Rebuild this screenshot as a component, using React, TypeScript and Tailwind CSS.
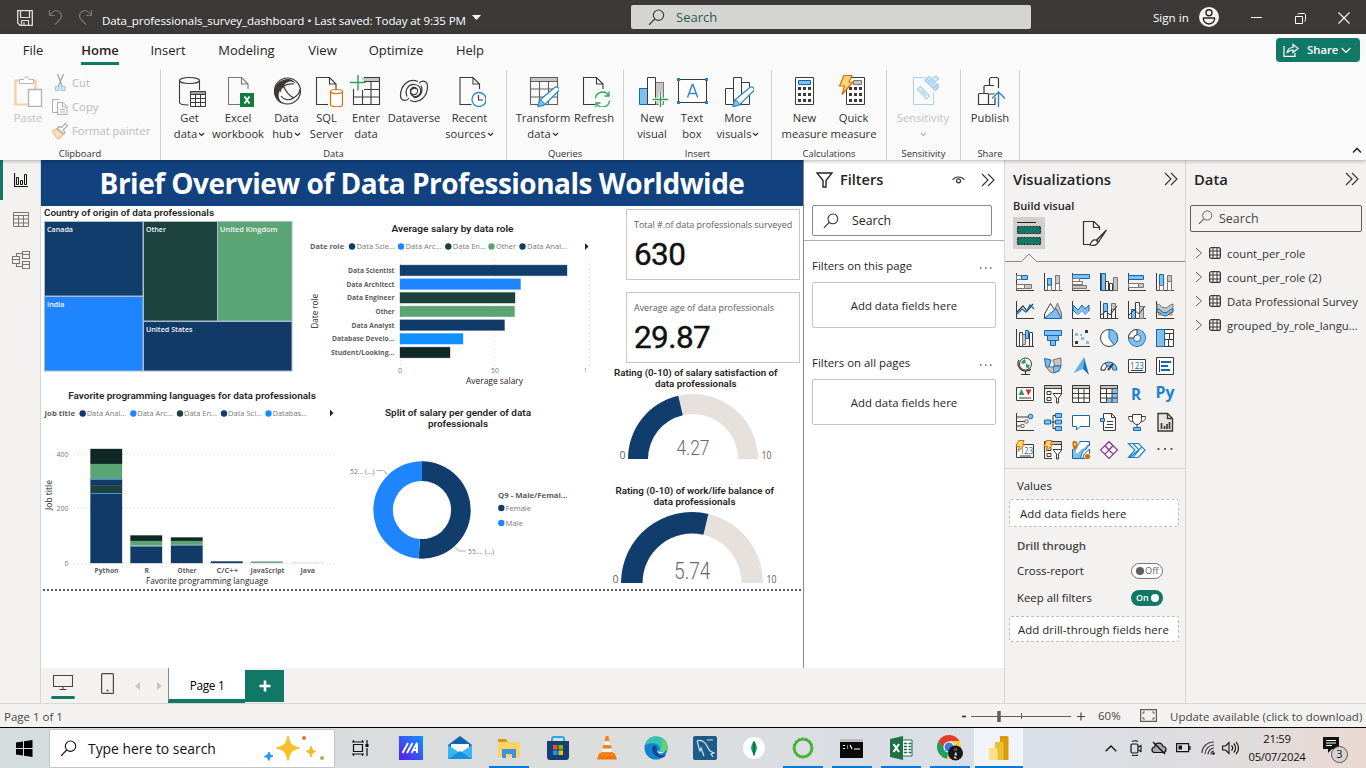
import React from "react";

type Kids = { children?: React.ReactNode };

const K = "#3b3a39";
const B = "#1068b5";
const F = "#83beec";
const G = "#c8c6c4";
const M = "#797775";

function Ico({ w = 32, h = 32, vb, children, className = "" }: { w?: number; h?: number; vb?: string; className?: string } & Kids) {
  return (
    <svg width={w} height={h} viewBox={vb ?? `0 0 ${w} ${h}`} fill="none" className={`block shrink-0 ${className}`}>
      {children}
    </svg>
  );
}

function T({ x, y, w, s, c = "#252423", b = 400, f = "Open Sans", children }: { x: number; y: number; w: number; s: number; c?: string; b?: number; f?: string; children: string }) {
  return (
    <text x={x} y={y} textLength={w} lengthAdjust="spacingAndGlyphs" fontSize={s} fill={c} fontWeight={b} fontFamily={`${f}, sans-serif`}>
      {children}
    </text>
  );
}

/* ---------- shared glyphs ---------- */
const Search = ({ size = 17, color = "#323130", className = "" }: { size?: number; color?: string; className?: string }) => (
  <Ico w={size} h={size} vb="0 0 17 17" className={className}>
    <circle cx="10.5" cy="6.2" r="5.2" stroke={color} strokeWidth="1.1" />
    <path d="M6.7 10 1 15.8" stroke={color} strokeWidth="1.2" />
  </Ico>
);
const DoubleChevron = () => (
  <Ico w={14} h={14}>
    <path d="M1 1l6 6-6 6M7 1l6 6-6 6" stroke="#323130" strokeWidth="1.1" />
  </Ico>
);
const Down = ({ color = "#323130" }: { color?: string }) => (
  <Ico w={7} h={5} className="ml-px inline-block">
    <path d="M1 1l2.500 2.500L6 1" stroke={color} strokeWidth="1.2" />
  </Ico>
);
const Page = ({ x = 6, color = K }: { x?: number; color?: string }) => (
  <g transform={`translate(${x} 0)`} stroke={color} strokeWidth="1.1">
    <path d="M0 2.5h13.5l7 7V30H0z" fill="#fafafa" stroke="none" />
    <path d="M9 29.5H.5v-27h13l6.500 6.500v5M13.500 2.500V9H20" />
    <path d="M8 29.500h4" />
  </g>
);
const Pencil = () => (
  <g>
    <path d="M11 31.5l1.600-6.300L28 12.300c2-1.500 5.200 1.300 3.800 3.500L17.300 30z" fill="#fafafa" stroke="#2b88c8" strokeWidth="1.2" />
    <path d="M11 31.5l1.600-6.300 2 .4 2.400 2.600.3 1.800z" fill={F} stroke="#2b88c8" />
  </g>
);

/* ---------- ribbon ---------- */
const GetData = () => (
  <Ico>
    <path d="M5.500 5.500v22c0 1.500 4 2.500 9 2.500M25.500 5.500V15" stroke={K} strokeWidth="1.1" />
    <ellipse cx="15.500" cy="5.500" rx="10" ry="3" stroke={K} strokeWidth="1.1" />
    <path d="M16.500 16.500h15v15h-15zM16.500 23.500h15M16.500 27.500h15M21.500 19v12M26.500 19v12" fill="#fff" stroke={K} />
    <path d="M16.500 16.500h15v3h-15z" fill="#a19f9d" stroke={K} />
  </Ico>
);
const Excel = () => (
  <Ico>
    <Page color={M} />
    <rect x="18" y="18" width="14" height="14" fill="#107c41" />
    <path d="M22.500 21.500l5 7M27.500 21.500l-5 7" stroke="#fff" strokeWidth="1.800" />
  </Ico>
);
const Hub = () => (
  <Ico>
    <circle cx="16.500" cy="16" r="13" stroke={K} strokeWidth="1.200" />
    <path d="M12 5C6 7 2.500 13 3.500 19c1 5 4 8.500 8.500 10-4-4-5.500-8-3.500-13L15 8c4-2.500 7-2 10 1-2-4-7-6.500-13-4z" fill={K} />
    <path d="M12.500 11c2 5 5 9 10 12M9 17c1-5 6-9 14-8M22 23c4-2 7-5 7-9M10 21c3 4 8 5 12.500 2" stroke={K} strokeWidth="1.200" />
  </Ico>
);
const Sql = () => (
  <Ico>
    <Page x={5} />
    <path d="M19.500 16.500v13c0 3 12 3 12 0v-13z" fill="#fff" stroke="#d86c00" strokeWidth="1.200" />
    <ellipse cx="25.500" cy="16.500" rx="6" ry="2" fill="#fff" stroke="#d86c00" strokeWidth="1.200" />
  </Ico>
);
const Enter = () => (
  <Ico>
    <path d="M11 2.500h18.500v4H14z" fill={G} />
    <path d="M14 2.500h15.500v27h-26V14M3.500 22h26M14 6.500h15.500M14 14.500h15.500M12.500 15v15M21 7v23" stroke={K} strokeWidth="1.100" />
    <path d="M0 7.500h15.500M8 0v15.500" stroke="#2e9e5b" strokeWidth="1.400" />
  </Ico>
);
const Dataverse = () => (
  <Ico>
    <path d="M20 6.500C10 2.500 2.500 11 2.500 20.500c0 5.500 6 6.500 8.500 2.500M12 25.500c10 4 17.500-4.500 17.500-14C29.500 6 24 4.500 21 8.500" stroke={K} strokeWidth="1.200" />
    <path d="M9 21.500c-3-7 2-12.500 7.500-12 6 .5 8 7 4.500 10.500-3 3-8.500 1.500-8.500-3 0-3 3.500-5 6-3M23 10.500c3 7-2 12.500-7.500 12" stroke={K} strokeWidth="1.200" />
    <circle cx="16" cy="16" r="3.600" stroke={K} strokeWidth="1.100" />
  </Ico>
);
const Recent = () => (
  <Ico>
    <Page x={5.500} />
    <circle cx="25" cy="24.500" r="7" fill="#fff" stroke="#2b88c8" strokeWidth="1.300" />
    <path d="M24.500 20v5H29" stroke={K} strokeWidth="1.200" />
  </Ico>
);
const Transform = () => (
  <Ico>
    <path d="M3.500 2.500h27v4h-27z" fill={G} />
    <path d="M3.500 2.500h27v27h-27zM3.500 6.500h27M3.500 14h27M3.500 22h27M12.500 7v22M21.500 7v22" stroke="#605e5c" strokeWidth="1.100" />
    <Pencil />
  </Ico>
);
const Refresh = () => (
  <Ico>
    <Page x={5} />
    <circle cx="24.500" cy="24.500" r="8" fill="#fafafa" />
    <path d="M17.500 23.500a7 7 0 0113-3M31.500 25.500a7 7 0 01-13 3M31 16.500v4.500h-4.500M18 32v-4h4.500" stroke="#34a45c" strokeWidth="1.300" />
  </Ico>
);
const NewVisual = () => (
  <Ico>
    <path d="M3.500 13.500h8v16h-8z" fill={F} stroke={B} />
    <path d="M19.500 7.500h8v22h-8z" fill={G} stroke={M} />
    <path d="M11.500 2.500h8v27h-8z" fill="#fff" stroke={K} />
    <path d="M16.500 24.500h16M24.500 17v15.500" stroke="#fafafa" strokeWidth="3.500" />
    <path d="M16.500 24.500H32M24.500 17v15" stroke="#2e9e5b" strokeWidth="1.300" />
  </Ico>
);
const TextBox = () => (
  <Ico>
    <path d="M2.500 4.500h28v23h-28z" stroke={K} fill="#fff" />
    <path d="M1 3h3v3H1zM29 3h3v3h-3zM1 26h3v3H1zM29 26h3v3h-3z" fill="#1c83cf" />
    <path d="M11.500 22.500l4.800-13h.6l4.800 13M13 18.500h7.200" stroke="#2b88c8" strokeWidth="1.400" />
  </Ico>
);
const MoreVisuals = () => (
  <Ico>
    <path d="M3.500 13.500h8v16h-8zM11.500 2.500h8v27h-8zM19.500 7.500h8v22h-8z" fill="#fff" stroke={K} />
    <Pencil />
  </Ico>
);
const Calc = ({ x }: { x: number }) => (
  <g transform={`translate(${x} 0)`}>
    <path d="M.5 2.500h18v27H.5z" fill="#fff" stroke={K} />
    {[12, 18, 24].map((y) => [3, 8, 13].map((c) => <rect key={`${c}${y}`} x={c} y={y} width="3" height="3" fill={K} />))}
  </g>
);
const NewMeasure = () => (
  <Ico>
    <Calc x={6} />
    <path d="M9.500 5.500h12v4h-12z" fill={F} stroke={B} />
  </Ico>
);
const QuickMeasure = () => (
  <Ico>
    <Calc x={8} />
    <path d="M15.500 5.500h8v4h-8z" fill={G} stroke={M} />
    <path d="M6 .5h8L11 7h4L4 19.500 6.500 11H1.500z" fill="#ffd37a" stroke="#d86c00" strokeWidth="1.200" />
  </Ico>
);
const Sensitivity = () => (
  <Ico>
    <path d="M18 2.500H6.500v27h20V17" stroke="#a9d1ec" />
    <path d="M10.500 14.500l3-3 9 9.500-3 3zM13.500 14.500l6 6.500" stroke="#a9d1ec" strokeWidth="1.200" />
    <path d="M18 5l4-3.500 10 10-3.500 4zM21 8l8-7 2.500 3-6 4.500M26 13l6-4" stroke="#a9d1ec" strokeWidth="1.500" fill="#e4f1fa" />
    <path d="M20 3.500l10 10M18 5l10 10" stroke="#a9d1ec" strokeWidth="1.500" />
  </Ico>
);
const Publish = () => (
  <Ico>
    <path d="M4.500 29.500v-10a1 1 0 011-1h8a1 1 0 011 1v10zM10 18v-6.500a1 1 0 011-1h9M15.500 10V4a2 2 0 012-1.500h5A2 2 0 0124.500 4v9M14.500 29.500H21V19h-6" stroke={K} strokeWidth="1.200" />
    <path d="M24.500 31V17.500M18.500 23l6-6 6 6" stroke="#fafafa" strokeWidth="3" />
    <path d="M24.500 32V17M18 23.500l6.500-6.500 6.500 6.500" stroke="#2b88c8" strokeWidth="1.400" />
  </Ico>
);

function Item({ icon, a, b, arrow, dim, className }: { icon: React.ReactNode; a: string; b?: string; arrow?: boolean; dim?: boolean; className: string }) {
  return (
    <div className={`flex shrink-0 flex-col items-center pt-[5px] ${className}`}>
      {icon}
      <div className={`mt-[3px] flex flex-col items-center whitespace-nowrap text-[11.2px] leading-4 ${dim ? "text-[#c3c1bf]" : "text-[#323130]"}`}>
        <div>{a}</div>
        <div className="flex h-4 items-center">
          {b}
          {arrow && <Down color={dim ? "#b5b3b1" : "#323130"} />}
        </div>
      </div>
    </div>
  );
}

function Group({ label, className, pad = "", children }: { label: string; className: string; pad?: string } & Kids) {
  return (
    <div className={`flex shrink-0 flex-col border-r border-[#d2d0ce] ${className}`}>
      <div className={`flex h-[77px] ${pad}`}>{children}</div>
      <div className="h-[13px] text-center text-[9.4px] leading-[13px] text-[#323130]">{label}</div>
    </div>
  );
}

function Ribbon() {
  return (
    <div className="flex h-[92px] items-start">
      <Group label="Clipboard" className="w-[161px]">
        <div className="flex w-[51px] flex-col items-center pl-[5px] pt-[5px]">
          <Ico>
            <path d="M9 5.500H3.500v24h12M21 5.500h2.500V14" stroke="#f3cf9f" strokeWidth="2.200" />
            <path d="M7.500 8.500v-4h4c1-3.500 5-3.500 6 0h4v4z" fill="#fff" stroke="#b5b3b1" />
            <path d="M16.500 14.500h13v17h-13z" fill="#fff" stroke="#b5b3b1" strokeWidth="1.300" />
          </Ico>
          <div className="mt-[3px] text-[11.2px] leading-4 text-[#c3c1bf]">Paste</div>
        </div>
        <div className="flex flex-col pt-[1px] text-[11.3px] text-[#bebbb8]">
          <div className="flex h-6 items-center gap-[3px]">
            <Ico w={18} h={18}>
              <path d="M6.500 0l4.500 12M12.500 0L7.500 12" stroke="#a19f9d" strokeWidth="1.200" />
              <path d="M4.500 12.500h3.500v4H4.500zM10.500 12.500H14v4h-3.500z" fill="#d7e9f6" stroke="#9fc9e8" strokeWidth="1.200" />
            </Ico>
            Cut
          </div>
          <div className="flex h-6 items-center gap-[3px]">
            <Ico w={18} h={18}>
              <path d="M6 14.500H1.500v-13H8l1 1M6.500 4.500H12l4 4v8H6.500zM11.500 5v4H16M9 11.500h5M9 14h5" stroke="#b0aeac" />
            </Ico>
            Copy
          </div>
          <div className="flex h-6 items-center gap-[3px]">
            <Ico w={18} h={18}>
              <path d="M1.500 8.500l4-1.500 6.500 5-3.500 4.500-3-.5z" fill="#fbe3c3" stroke="#f0b98a" strokeWidth="1.200" />
              <path d="M6 6.500l7 5.500 1-2-2-2 4.500-4-2-2.500L10.500 5.500 8 4.500z" fill="#fff" stroke="#a8a6a4" strokeWidth="1.100" />
            </Ico>
            <span className="whitespace-nowrap tracking-[-0.05px]">Format painter</span>
          </div>
        </div>
      </Group>
      <Group label="Data" className="w-[346px]" pad="pl-[8px]">
        <Item className="w-[41px]" icon={<GetData />} a="Get" b="data" arrow />
        <Item className="w-14" icon={<Excel />} a="Excel" b="workbook" />
        <Item className="w-[41px]" icon={<Hub />} a="Data" b="hub" arrow />
        <Item className="w-[39px]" icon={<Sql />} a="SQL" b="Server" />
        <Item className="w-[40px]" icon={<Enter />} a="Enter" b="data" />
        <Item className="w-14" icon={<Dataverse />} a="Dataverse" />
        <Item className="w-[55px]" icon={<Recent />} a="Recent" b="sources" arrow />
      </Group>
      <Group label="Queries" className="w-[117px]" pad="pl-[7px]">
        <Item className="w-[58px]" icon={<Transform />} a="Transform" b="data" arrow />
        <Item className="w-11" icon={<Refresh />} a="Refresh" />
      </Group>
      <Group label="Insert" className="w-[148px]" pad="pl-[8px]">
        <Item className="w-10" icon={<NewVisual />} a="New" b="visual" />
        <Item className="w-10" icon={<TextBox />} a="Text" b="box" />
        <Item className="w-[52px]" icon={<MoreVisuals />} a="More" b="visuals" arrow />
      </Group>
      <Group label="Calculations" className="w-[115px]" pad="pl-[8px]">
        <Item className="w-[49px]" icon={<NewMeasure />} a="New" b="measure" />
        <Item className="w-[49px]" icon={<QuickMeasure />} a="Quick" b="measure" />
      </Group>
      <Group label="Sensitivity" className="w-[74px]" pad="pl-[6px]">
        <Item className="w-[60px]" icon={<Sensitivity />} a="Sensitivity" dim arrow />
      </Group>
      <Group label="Share" className="w-[59px]">
        <Item className="w-[58px]" icon={<Publish />} a="Publish" />
      </Group>
      <Ico w={10} h={7} className="mr-[4px] ml-auto mt-[77px]">
        <path d="M1 5.500L5 1.500l4 4" stroke="#323130" strokeWidth="1.700" />
      </Ico>
    </div>
  );
}

function TitleBar() {
  return (
    <header className="flex h-[34px] shrink-0 items-center bg-[#3b3a39] text-white">
      <Ico w={16} h={16} className="ml-[17px] mt-px">
        <path d="M.7.700h14.600v14.600H3L.7 13z" stroke="#e1dfdd" strokeWidth="1.300" />
        <path d="M3.500 1v6.500h9V1M4.500 15v-4.500h7V15M7 12v3" stroke="#e1dfdd" strokeWidth="1.200" />
      </Ico>
      <Ico w={15} h={16} className="ml-[15px]">
        <path d="M1.500 1v5.500H7M1.500 6.500C5 1 9 .5 11.500 3s2.500 5.500 0 8L7 15.500" stroke="#797775" strokeWidth="1.200" />
      </Ico>
      <Ico w={15} h={16} className="ml-[15px]">
        <path d="M13.500 1v5.500H8M13.500 6.500C10 1 6 .5 3.500 3s-2.500 5.500 0 8L8 15.500" stroke="#797775" strokeWidth="1.200" />
      </Ico>
      <div className="ml-[9px] mt-[7px] w-[364px] whitespace-nowrap text-[11.6px] leading-4 tracking-[-0.13px]">Data_professionals_survey_dashboard • Last saved: Today at 9:35 PM</div>
      <Ico w={9} h={5} className="ml-[6px]">
        <path d="M0 0h9L4.500 5z" fill="#fff" />
      </Ico>
      <div className="ml-[150px] flex h-6 w-[400px] items-center rounded-[2px] bg-[#d4d4d2] pl-[17px] text-[13px] text-[#2d5c4e]">
        <Search color="#3b3a39" />
        <span className="ml-[11px] pt-px">Search</span>
      </div>
      <span className="ml-[122px] mt-[2px] w-[37px] whitespace-nowrap text-[11.6px]">Sign in</span>
      <Ico w={20} h={20} className="ml-[9px]">
        <circle cx="10" cy="10" r="10" fill="#f3f2f1" />
        <circle cx="10" cy="5.800" r="3" stroke="#252423" strokeWidth="1.400" />
        <path d="M4.500 11h11c.5 2.500-1.500 6-5.500 6s-6-3.500-5.500-6z" stroke="#252423" strokeWidth="1.400" />
      </Ico>
      <Ico w={11} h={11} className="ml-[32px]"><path d="M0 5.500h11" stroke="#fff" /></Ico>
      <Ico w={11} h={11} className="ml-[33px] mt-[2px]"><path d="M.5 3.500h7v7h-7zM2.500 1.500C3 1 3.500.5 4 .5h5c1 0 1.500.5 1.500 1.500v5c0 .5-.5 1-1 1.500" stroke="#fff" /></Ico>
      <Ico w={12} h={12} className="ml-[32px] mt-px"><path d="M.5.5l11 11M11.500.5l-11 11" stroke="#fff" strokeWidth="1.100" /></Ico>
    </header>
  );
}

function Tabs() {
  const tabs: [string, string][] = [
    ["File", "w-[20px] ml-[23px]"],
    ["Home", "w-[38px] ml-[38px]"],
    ["Insert", "w-[34px] ml-[32px]"],
    ["Modeling", "w-[59px] ml-[32px]"],
    ["View", "w-[29px] ml-[32px]"],
    ["Optimize", "w-[56px] ml-[31px]"],
    ["Help", "w-[28px] ml-[32px]"],
  ];
  return (
    <nav className="flex h-9 items-start text-[13px] text-[#252423]">
      {tabs.map(([t, c]) => (
        <div key={t} className={`flex h-[31px] flex-col items-center whitespace-nowrap pt-[7px] ${c} ${t === "Home" ? "border-b-[3px] border-[#117865] font-semibold" : ""}`}>
          <span className="leading-[18px]">{t}</span>
        </div>
      ))}
      <button className="mr-[6px] ml-auto mt-[4px] flex h-6 w-[84px] items-center rounded bg-[#117865] pl-[7px] text-[11.300px] font-semibold text-white">
        <Ico w={16} h={14}>
          <path d="M1 3v10.300h11V10M4 10c.5-3.500 2.500-5.500 6-5.500V1.500l5 4-5 4V7C7.500 7 5.500 8 4 10z" stroke="#fff" strokeWidth="1.200" />
        </Ico>
        <span className="ml-[8px] mt-px w-[30px]">Share</span>
        <Ico w={10} h={7} className="ml-[4px]"><path d="M.7 1L5 5.500 9.300 1" stroke="#fff" strokeWidth="1.200" /></Ico>
      </button>
    </nav>
  );
}

/* ---------- report visuals ---------- */
const NAVY = "#113a69";
const SKY = "#1f85ff";
const TEAL = "#1c423e";
const GREEN = "#5ba473";
const DARK = "#0f2725";
const AZURE = "#1090ff";

function Treemap() {
  const cells: [number, number, number, number, string, string, number][] = [
    [44.5, 221.5, 98.5, 74.5, "#113d6d", "Canada", 26],
    [44.5, 296.5, 98.5, 74.5, SKY, "India", 17.5],
    [143.5, 221.5, 74, 99.5, TEAL, "Other", 20],
    [217.5, 221.5, 74.5, 99.500, GREEN, "United Kingdom", 57.500],
    [143.5, 321.5, 148.5, 49.5, NAVY, "United States", 46.500],
  ];
  return (
    <svg width="259" height="180" viewBox="41 206 259 180" className="block shrink-0">
      <T x={44} y={216} w={170} s={9.800} b={600} f="Roboto">Country of origin of data professionals</T>
      {cells.map(([x, y, w, h, c, t, l]) => (
        <g key={t}>
          <rect x={x} y={y} width={w} height={h} fill={c} stroke="#a9bccb" strokeWidth="1" />
          <T x={x + 2.500} y={y + 10.500} w={l} s={7.600} b={600} c="#f3f6f8">{t}</T>
        </g>
      ))}
    </svg>
  );
}

function BarChart() {
  const rows: [string, number, string, number][] = [
    ["Data Scientist", 567, "#113d6d", 46.5],
    ["Data Architect", 520.5, SKY, 48],
    ["Data Engineer", 515, TEAL, 47.5],
    ["Other", 514.500, GREEN, 19],
    ["Data Analyst", 504.500, NAVY, 43],
    ["Database Develo...", 463, AZURE, 62.5],
    ["Student/Looking...", 450, DARK, 63.5],
  ];
  const legend: [number, string, number, string][] = [
    [352, "Data Scie...", 38.5, "#113d6d"],
    [401, "Data Arc...", 36, SKY],
    [448.3, "Data En...", 33, TEAL],
    [491.5, "Other", 20, GREEN],
    [522.500, "Data Anal...", 40, NAVY],
  ];
  return (
    <svg width="304" height="180" viewBox="300 206 304 180" className="block shrink-0">
      <T x={391.500} y={232} w={122} s={9.800} b={600} f="Roboto">Average salary by data role</T>
      <T x={310} y={249} w={34} s={7.600} b={700} c="#605e5c">Date role</T>
      {legend.map(([x, t, w, c]) => (
        <g key={t}>
          <circle cx={x} cy={246.500} r="3.200" fill={c} />
          <T x={x + 4.500} y={249} w={w} s={7.800} c="#797775">{t}</T>
        </g>
      ))}
      <path d="M585 243v7l3.500-3.500z" fill="#252423" />
      {[400.5, 494.5, 589.5].map((x) => (
        <path key={x} d={`M${x} 260v105`} stroke="#d8d6d4" strokeDasharray="1 3" />
      ))}
      {rows.map(([t, e, c, w], i) => {
        const y = 270.4 + i * 13.68;
        return (
          <g key={t}>
            <rect x={400} y={y - 5.300} width={e - 400} height={10.600} fill={c} stroke={c} strokeOpacity=".35" />
            <T x={394.500 - w} y={y + 2.600} w={w} s={7.400} b={700} c="#605e5c">{t}</T>
          </g>
        );
      })}
      <T x={398} y={373} w={4} s={7} c="#797775">0</T>
      <T x={491} y={373} w={8} s={7} c="#797775">50</T>
      <T x={584} y={373} w={3} s={7} c="#797775">1</T>
      <T x={466} y={384} w={57} s={8.800}>Average salary</T>
      <g transform="translate(318 328.500) rotate(-90)"><T x={0} y={0} w={34.500} s={8.800}>Date role</T></g>
    </svg>
  );
}

function ColumnChart() {
  const legend: [number, string, number, string][] = [
    [82.7, "Data Anal...", 39.5, NAVY],
    [133.3, "Data Arc...", 35.5, SKY],
    [180, "Data En...", 33, TEAL],
    [224, "Data Sci...", 34, "#113d6d"],
    [268.500, "Databas...", 34.5, AZURE],
  ];
  const seg: [number, number, number, string][] = [
    [90.5, 449, 15, DARK], [90.5, 464, 15, GREEN], [90.5, 479.5, 6, NAVY], [90.5, 485.500, 8, TEAL], [90.5, 493.500, 69.5, NAVY],
    [130.5, 535.5, 5.5, DARK], [130.5, 541, 4.5, GREEN], [130.5, 546.500, 16.5, NAVY],
    [171, 537.5, 3.5, DARK], [171, 541, 3.8, GREEN], [171, 546, 17, NAVY],
    [211, 561.5, 1.500, NAVY], [251, 561.500, 1.500, "#7fa694"], [292, 562.500, 0.500, "#cfe3d6"],
  ];
  const labels: [string, number, number][] = [["Python", 94.5, 24], ["R", 144.5, 4.500], ["Other", 177.5, 19], ["C/C++", 216.5, 21.500], ["JavaScript", 250.5, 34], ["Java", 300.5, 14.5]];
  return (
    <svg width="299" height="202" viewBox="41 386 299 202" className="block shrink-0">
      <T x={68.300} y={399} w={247.500} s={9.800} b={600} f="Roboto">Favorite programming languages for data professionals</T>
      <T x={44.500} y={416} w={30.500} s={7.600} b={700} c="#605e5c">Job title</T>
      {legend.map(([x, t, w, c]) => (
        <g key={t}>
          <circle cx={x} cy={413.500} r="3.200" fill={c} />
          <T x={x + 4} y={416} w={w} s={7.800} c="#797775">{t}</T>
        </g>
      ))}
      <path d="M330 409.500v7l3.500-3.500z" fill="#252423" />
      {[454.5, 508.5, 563.5].map((y) => (
        <path key={y} d={`M74 ${y}h262`} stroke="#d8d6d4" strokeDasharray="1 3" />
      ))}
      <T x={56.500} y={457.300} w={12} s={7} c="#797775">400</T>
      <T x={56.500} y={511.300} w={12} s={7} c="#797775">200</T>
      <T x={64.500} y={566} w={4} s={7} c="#797775">0</T>
      {seg.map(([x, y, h, c]) => (
        <rect key={`${x}-${y}`} x={x} y={y} width="31.500" height={h} fill={c} stroke={c} strokeOpacity=".35" />
      ))}
      <path d="M90 479.500h32M90 493.500h32" stroke="#4a90d9" />
      <path d="M130 546.500h32M171 545.500h32" stroke="#5f8fa6" />
      {labels.map(([t, x, w]) => <T key={t} x={x} y={573} w={w} s={7.400} b={700} c="#605e5c">{t}</T>)}
      <T x={146} y={584} w={122} s={8.800}>Favorite programming language</T>
      <g transform="translate(52 510) rotate(-90)"><T x={0} y={0} w={30} s={8.800}>Job title</T></g>
    </svg>
  );
}

function Donut() {
  return (
    <svg width="264" height="202" viewBox="340 386 264 202" className="block shrink-0">
      <T x={385} y={416} w={146} s={9.800} b={600} f="Roboto">Split of salary per gender of data</T>
      <T x={428} y={427} w={60} s={9.800} b={600} f="Roboto">professionals</T>
      <path d="M422 461.300a48.700 48.700 0 11-3.400 97.280l1.370-19.530a29.120 29.120 0 102.030-58.170z" fill="#113d6d" />
      <path d="M418.600 558.580A48.700 48.700 0 01422 461.300v19.580a29.120 29.120 0 00-2.030 58.170z" fill={SKY} />
      <path d="M376.500 470.500h7l4 4M455 547l3.500 4h7.500" stroke="#b3b0ad" fill="none" />
      <T x={350} y={474} w={24.500} s={7} c="#797775">52... (...)</T>
      <T x={468} y={554} w={26} s={7} c="#797775">55.... (...)</T>
      <T x={498} y={498} w={69.500} s={7.600} b={700} c="#605e5c">Q9 - Male/Femal...</T>
      <circle cx="501.300" cy="508" r="3.200" fill="#113d6d" />
      <circle cx="501.300" cy="523" r="3.200" fill={SKY} />
      <T x={505.500} y={511} w={25.500} s={7.800} c="#797775">Female</T>
      <T x={505.500} y={526} w={17.500} s={7.800} c="#797775">Male</T>
    </svg>
  );
}

function arc(cx: number, cy: number, R: number, r: number, a: number, b: number) {
  const p = (q: number, t: number) => `${(cx - q * Math.cos(Math.PI * t)).toFixed(2)} ${(cy - q * Math.sin(Math.PI * t)).toFixed(2)}`;
  return `M${p(R, a)}A${R} ${R} 0 0 1 ${p(R, b)}L${p(r, b)}A${r} ${r} 0 0 0 ${p(r, a)}z`;
}

function Gauges() {
  return (
    <svg width="199" height="225" viewBox="604 363 199 225" className="block shrink-0">
      <T x={614} y={376} w={163.500} s={9.800} b={600} f="Roboto">Rating (0-10) of salary satisfaction of</T>
      <T x={655} y={387} w={81.500} s={9.800} b={600} f="Roboto">data professionals</T>
      <path d={arc(693, 459, 65, 45, 0, 1)} fill="#e6e1dc" />
      <path d={arc(693, 459, 65, 45, 0, 0.427)} fill="#113d6d" />
      <T x={676.500} y={455.300} w={33} s={21} b={300} c="#6b6967" f="Roboto">4.27</T>
      <T x={619.500} y={459} w={6} s={10} c="#605e5c">0</T>
      <T x={761.500} y={459} w={10} s={10} c="#605e5c">10</T>
      <T x={615.500} y={494} w={158.500} s={9.800} b={600} f="Roboto">Rating (0-10) of work/life balance of</T>
      <T x={653.500} y={505} w={82} s={9.800} b={600} f="Roboto">data professionals</T>
      <path d={arc(692, 583, 71, 49.500, 0, 1)} fill="#e6e1dc" />
      <path d={arc(692, 583, 71, 49.500, 0, 0.574)} fill="#113d6d" />
      <T x={674} y={579} w={36.500} s={23.500} b={300} c="#6b6967" f="Roboto">5.74</T>
      <T x={612.500} y={583} w={6} s={10} c="#605e5c">0</T>
      <T x={766.500} y={583} w={10} s={10} c="#605e5c">10</T>
    </svg>
  );
}

function Card({ title, value }: { title: string; value: string }) {
  return (
    <div className="ml-[22px] h-[71px] w-[174px] shrink-0 border border-[#c8c6c4] pl-[7px] pt-[8px]">
      <div className="whitespace-nowrap text-[9px] leading-[14px] tracking-[-0.04px] text-[#605e5c]">{title}</div>
      <div className="mt-[3px] font-['Roboto'] text-[31.5px] leading-[40px] tracking-[-0.6px] text-[#111] [-webkit-text-stroke:0.4px_#111]">{value}</div>
    </div>
  );
}

function Report() {
  return (
    <main className="flex w-[762px] shrink-0 flex-col bg-white">
      <h1 className="flex h-[46px] shrink-0 items-center justify-center whitespace-nowrap bg-[#11427f] text-[28px] font-bold tracking-[-0.5px] text-white">
        Brief Overview of Data Professionals Worldwide
      </h1>
      <div className="flex h-[382px]">
        <div className="w-[563px]">
          <div className="flex"><Treemap /><BarChart /></div>
          <div className="flex"><ColumnChart /><Donut /></div>
        </div>
        <div className="flex flex-col pt-[3px]">
          <Card title="Total #.of data professionals surveyed" value="630" />
          <div className="h-3 shrink-0" />
          <Card title="Average age of data professionals" value="29.87" />
          <Gauges />
        </div>
      </div>
      <div className="ml-[2px] mt-[1px] h-[2px] bg-[repeating-linear-gradient(90deg,#5a5856_0_2px,transparent_2px_4px)]" />
    </main>
  );
}

/* ---------- panes ---------- */
function FilterBlock({ title }: { title: string }) {
  return (
    <div className="h-[97px]">
      <div className="mr-[12px] flex h-[18px] items-center justify-between text-[11.400px] text-[#252423]">
        {title}
        <Ico w={12} h={2} className="mt-[3px]"><path d="M0 1h1.500M5 1h1.500M10 1h1.500" stroke="#605e5c" strokeWidth="1.500" /></Ico>
      </div>
      <div className="mt-[7px] flex h-[46px] w-[184px] items-center justify-center rounded-[2px] border border-[#c8c6c4] pt-[2px] text-[11.400px]">Add data fields here</div>
    </div>
  );
}

function Filters() {
  return (
    <aside className="w-[201px] shrink-0 border-l border-[#8a8886] bg-white text-[#252423]">
      <div className="flex h-[81px] flex-col border-b border-[#b3b0ad] pl-[8px]">
        <div className="flex h-[38px] items-center pl-[4px] pt-px">
          <Ico w={17} h={16}><path d="M1 1h15l-6 7.500V15H7V8.500z" stroke="#252423" strokeWidth="1.400" /></Ico>
          <span className="ml-[7px] w-[44px] text-[14.500px] font-semibold">Filters</span>
          <Ico w={13} h={9} className="ml-[68px]">
            <path d="M.7 5C3 1 10 1 12.300 5" stroke="#323130" strokeWidth="1.200" />
            <circle cx="6.500" cy="5.800" r="2" stroke="#323130" strokeWidth="1.200" />
          </Ico>
          <span className="w-[16px]" />
          <DoubleChevron />
        </div>
        <div className="mt-[7px] flex h-[31px] w-[180px] items-center rounded-[2px] border border-[#8a8886] pl-[10px] text-[12.300px]">
          <Search size={16} />
          <span className="ml-[13px] pt-px">Search</span>
        </div>
      </div>
      <div className="pl-[8px] pt-[16px]">
        <FilterBlock title="Filters on this page" />
        <FilterBlock title="Filters on all pages" />
      </div>
    </aside>
  );
}

const axis = <path d="M.5 0v17.500H18" stroke={K} />;
const bolt = <path d="M2.500-.5H8L6.500 3.500H9L2 10.500 3.500 5.500H0z" fill="#ffd37a" stroke="#d86c00" />;
const slicer = (
  <>
    <path d="M17.500 8V.5H.5v17H8M.5 3.500h17M3 6.500h4v3H3zM3 12.500h4v3H3z" stroke={K} fill="#fff" />
    <path d="M1 1h16v2H1z" fill={G} />
    <path d="M9 8.500h9l-3.500 4.500v5h-2v-5z" fill="#fff" stroke={K} />
  </>
);
const vizIcons: React.ReactNode[] = [
  <>{axis}<path d="M.5 2.500h5v4h-5zM.5 11.500h8v4h-8z" stroke={M} fill="#fff" /><path d="M5.500 2.500h6v4h-6z" fill={F} stroke={B} /><path d="M8.500 11.500h7v4h-7z" fill={G} stroke={M} /></>,
  <>{axis}<path d="M3.500 12h4v5.500h-4zM11.500 10h4v7.500h-4z" stroke={M} fill="#fff" /><path d="M3.500 5.500h4v6.500h-4z" fill={F} stroke={B} /><path d="M11.500 2.500h4v8h-4z" fill={G} stroke={M} /></>,
  <>{axis}<path d="M.5 1.500h17v4H.5z" fill={F} stroke={B} /><path d="M.5 5.500h7v3h-7zM.5 8.500h10v3H.5z" stroke={M} fill="#fff" /><path d="M.5 12.500h14v3H.5z" fill={G} stroke={M} /></>,
  <>{axis}<path d="M1.500.5h4v17h-4z" fill={F} stroke={B} /><path d="M5.500 8.500h3v9h-3zM9.500 10.500h3v7h-3z" stroke={K} fill="#fff" /><path d="M13.500 4.500h4v13h-4z" fill={G} stroke={M} /></>,
  <>{axis}<path d="M.5 10.500h10v4H.5z" stroke={M} fill="#fff" /><path d="M.5 2.500h15v4H.5z" fill={F} stroke={B} /><path d="M10.500 10.500h5v4h-5z" fill={G} stroke={M} /></>,
  <>{axis}<path d="M3.500 1.500h4v13h-4z" fill={F} stroke={B} /><path d="M11.500 2.500h4v6h-4z" fill={G} stroke={M} /><path d="M3.500 12.500h4v5h-4zM11.500 8.500h4v9h-4z" fill="#fff" stroke={M} /></>,
  <>{axis}<path d="M1 11l6-6 4 5 6-7" stroke={K} strokeWidth="1.200" /><path d="M1 13l5-5 4 3 4-7 4 4" stroke={B} strokeWidth="1.200" /></>,
  <><path d="M7 17L13.500 2l4 10v5z" fill={G} stroke={M} /><path d="M.5 13l6-10.500 5 8L5 17H.5z" fill="#fff" stroke={K} /><path d="M.5 17.500L12 7.500l5.500 10z" fill={F} stroke={B} /></>,
  <>{axis}<path d="M1 4l5 5 4-5 3 4 4-4v6l-4 4-3-4-4 4-5-5z" fill={F} stroke={B} /><path d="M1 10l5 4 4-4 3 4 4-4v7H1z" fill="#fff" /></>,
  <>{axis}<path d="M3.500 2.500h4v8h-4z" fill={F} stroke={B} /><path d="M11.500 2.500h4v6h-4z" fill={G} stroke={M} /><path d="M3.500 10.500v7M7.500 10.500v7M11.500 8v9M15.500 8v9M1 14l5-4 4 4 7-9" stroke={K} /></>,
  <>{axis}<path d="M3.500 8.500h4v9h-4z" fill={F} stroke={B} /><path d="M7.500 1.500h4v16h-4z" fill="#fff" stroke={K} /><path d="M11.500 5.500h4v12h-4z" fill={G} stroke={M} /><path d="M1 14l5-5 5 4 6-8" stroke={K} /></>,
  <>{axis}<path d="M2 10.500h4v4H2zM12.500 10.500h4v4h-4z" fill="#f08a24" /><path d="M1 3c4 0 4 4 8 4s4-4 8-4v5c-4 0-4 4-8 4s-4-4-8-4z" fill={G} stroke={M} /><path d="M1 8c4 0 5 4 8 4s4-4 8-4v3c-4 0-4 4-8 4s-4-4-8-4z" fill={F} stroke={B} /></>,
  <>{axis}<path d="M3.500 3.500h3v14h-3zM13.500 3.500h3v14h-3z" fill="#fff" stroke={K} /><path d="M6.500 5.500h3v10h-3z" fill={G} stroke={M} /><path d="M9.500 1.500h3v8h-3z" fill={F} stroke={B} /></>,
  <><path d="M.5 1.500h17v5H.5zM3.500 6.500h11v5h-11zM6.500 11.500h5v5h-5z" fill={F} stroke={B} /></>,
  <>{axis}<path d="M3 4h3v3H3zM9 8h3v3H9zM14 12h3v3h-3z" fill={F} /><path d="M13 1h3v3h-3zM3 12h3v3H3z" fill={K} /><path d="M8 5h2v2H8z" fill={F} /></>,
  <><circle cx="9" cy="9" r="8.500" fill="#fff" stroke={K} /><path d="M9 .5a8.500 8.500 0 015 15.500L9 9z" fill={F} stroke={B} /></>,
  <><circle cx="9" cy="9" r="6" stroke={B} strokeWidth="6" /><circle cx="9" cy="9" r="6" stroke={F} strokeWidth="4.500" /><path d="M9 .5A8.500 8.500 0 00.5 9h5.500a3 3 0 013-3z" fill="#fff" stroke={K} /></>,
  <><path d="M.5.5h17v17H.5zM8 4.500h9.500M13.500 4.500v6M8 10.500h9.500M12.500 10.500v7" fill="#fff" stroke={K} /><path d="M.5.5h8v17h-8z" fill={F} stroke={B} /></>,
  <><circle cx="9.500" cy="7" r="6" fill="#fff" stroke={K} /><path d="M6 4l3-2 1 3-2 2-3-1zM10 7l4 1-2 4-2-2z" fill="#2e9e5b" /><path d="M3 3c-3 5 1 11 7 11 3 0 4-1 5-2M9.500 14v3.500M5 17.500h9" stroke={K} strokeWidth="1.200" /></>,
  <><path d="M9 3l3-1 5-1v8h-6z" fill={G} stroke={M} /><path d="M.5 1.500L7 3l-2 7H2zM9 9h8l-2 5-5 2z" fill={F} stroke={B} /><path d="M2 10h7l1 6-4-1z" fill={G} stroke={M} /></>,
  <><path d="M12 0L1.500 16 11 12z" fill="#5cb6e6" /><path d="M12 0l5 18-6-6z" fill="#1679b8" /></>,
  <><path d="M1 13a8 8 0 0116 0h-4a4 4 0 00-8 0z" fill={F} stroke={B} /><path d="M1 13a8 8 0 014-7l2 3.500c-1 .5-2 2-2 3.500z" fill="#fff" stroke={K} /><path d="M8 13l5-6" stroke={K} strokeWidth="2" /></>,
  <><path d="M.5 2.500h17v13H.5zM3 13.500h12" fill="#fff" stroke={K} /><text x="2" y="11.500" fontSize="8.500" fill={B} fontFamily="Open Sans" textLength="14" lengthAdjust="spacingAndGlyphs">123</text></>,
  <><path d="M.5.5h17v17H.5z" fill="#fff" stroke={K} /><path d="M3.500 3v12" stroke={K} /><path d="M5 5h10M5 9h7M5 13h9" stroke={B} strokeWidth="2" /></>,
  <><path d="M.5 2.500h17v13H.5zM3 13h12" fill="#fff" stroke={K} /><path d="M2.500 10L5.500 4l3 6z" fill="#2e9e5b" /><path d="M9.500 4.500h6l-3 6z" fill="#d13438" /></>,
  slicer,
  <><path d="M.5.5h17v17H.5zM.5 8.500h17M.5 13h17M6.500 3.500v14M12 3.500v14" fill="#fff" stroke={K} /><path d="M.5.500h17v3H.5z" fill={G} stroke={K} /></>,
  <><path d="M.5.5h17v17H.5z" fill="#fff" stroke={K} /><path d="M12 4h5.500v13.500H6.500V13H12z" fill={F} /><path d="M.5 8.500h17M.5 13h17M6.500 3.500v14M12 3.500v14" stroke={K} /><path d="M.5.500h17v3H.5z" fill={G} stroke={K} /></>,
  <><text x="3" y="14.500" fontSize="16" fontWeight="700" fill="#1c83cf" fontFamily="Open Sans" textLength="10" lengthAdjust="spacingAndGlyphs">R</text></>,
  <><text x="-.5" y="13" fontSize="16" fontWeight="700" fill="#1c83cf" fontFamily="Open Sans" textLength="19" lengthAdjust="spacingAndGlyphs">Py</text></>,
  <>{axis}<path d="M1 4h11M1 8.500h9M1 13h5" stroke={K} /><circle cx="14.500" cy="3.500" r="2.300" fill={F} stroke={B} /><path d="M9 7h3v3H9zM5 11.500h3v3H5z" fill="#fff" stroke={M} /></>,
  <><path d="M6 9h6M9 2.500v13M9 2.500h3M9 15.500h3" stroke={K} /><path d="M.5 7h6v4h-6zM11.500.500h6v4h-6zM11.500 7h6v4h-6zM11.500 13.500h6v4h-6z" fill={F} stroke={B} /></>,
  <><path d="M.5 2.500h17v11H8L4.500 17v-3.500h-4z" fill="#fff" stroke={B} /></>,
  <><path d="M3.500.500h8l4 4v13h-12zM11.500.500v4h4M7 8.500h6M7 11.500h6M5 14.500h8" fill="#fff" stroke={K} /><path d="M.5 5.500h4v3h-4z" fill={F} stroke={B} /></>,
  <><path d="M4.500 1.500h9v5c0 3-2 5-4.500 5s-4.500-2-4.500-5zM4 3.500H.5c0 3 1 5 4.500 5M14 3.500h3.500c0 3-1 5-4.500 5M9 12v3" fill="#fff" stroke={K} /><path d="M5.500 14.500h7v3h-7z" fill={F} stroke={B} /></>,
  <><path d="M2 .500h9.500l5 5V18H2zM11.500.500v5h5" fill="#e6e4e2" stroke={K} strokeWidth="1.400" /><path d="M5.500 10v6M8.500 13v3M11 11v5M13.500 9v7" stroke={K} strokeWidth="1.700" /></>,
  <><path d="M.5 3.500h17v13H.5zM4 15h11" fill="#fff" stroke={K} /><text x="4" y="12.500" fontSize="8.500" fill={B} fontFamily="Open Sans" textLength="13" lengthAdjust="spacingAndGlyphs">123</text>{bolt}</>,
  <>{slicer}{bolt}</>,
  <><path d="M7.500.5h10v4c-3 0-2 4-5 4.500-3 .5-2 5-5 8.500h-7V8" fill={F} stroke={B} /><path d="M9 1h8v2c-3 0-3 4-6 4.500C8 8 8 12 4 12.500V9z" fill="#fff" /><path d="M11 17.500c0-3 1.500-5 3.500-6.500l3-3v5M8 17.500h5" stroke={B} /><path d="M3 0C0-1-1 4 3 9.500c4-5.500 3-9.500 0-9.500z" fill="#d86c00" /><circle cx="3" cy="3.300" r="1.100" fill="#fff" /><circle cx="15.500" cy="15.500" r="2.600" fill="#d86c00" /></>,
  <><path d="M9 .500L17.500 9 9 17.500.5 9zM5 5l8 8M13 5l-8 8" fill="#fff" stroke="#8c3a94" strokeWidth="1.200" /><path d="M9 1l3.500 4L9 8.500 5.500 5z" stroke="#8c3a94" /></>,
  <><path d="M.5 2.500h10L17 9l-6.500 7.500H.5L7 9zM5 2.500L11 9l-6 7.500M2 16.500L14 6" fill="#fff" stroke="#2080d0" strokeWidth="1.200" /></>,
  <><path d="M1.500 8h2M8 8h2M14.500 8h2" stroke="#323130" strokeWidth="1.500" /></>,
];

function Visualizations() {
  return (
    <aside className="flex w-[181px] shrink-0 flex-col border-l border-[#d8d6d4] text-[#252423]">
      <div className="flex h-[38px] items-center justify-between pr-[7px] pl-[8px]">
        <span className="text-[14.800px] font-semibold">Visualizations</span>
        <DoubleChevron />
      </div>
      <div className="pl-[8px] text-[11.100px] font-semibold leading-[16px]">Build visual</div>
      <div className="mt-[3px] flex h-8 pl-[8px]">
        <div className="flex h-8 w-8 items-center justify-center bg-[#d2d0ce]">
          <Ico w={26} h={26}>
            <path d="M1 2.500h19" stroke="#252423" />
            <path d="M1.500 6.500h23v7h-23zM1.500 17.500h23v7h-23z" fill="#117865" stroke="#252423" strokeDasharray="2 1" strokeWidth="1.200" />
          </Ico>
        </div>
        <Ico w={26} h={26} className="ml-[37px] mt-[3px]">
          <path d="M8 24.500H1.500v-23H12L17.500 7v3M11.500 1.500V7.500h6" stroke="#323130" strokeWidth="1.200" />
          <path d="M24.500 10L15 20M24.500 10l-8 12-2-2zM14 20c-3-1-5 2-6 5 4 1 7 0 8-3z" stroke="#323130" strokeWidth="1.200" fill="#fff" />
        </Ico>
      </div>
      <svg width="180" height="10" viewBox="0 0 180 10" fill="none" className="mt-[4px] block">
        <path d="M0 8.500h16.500L24 1l7.500 7.500H180" stroke="#8a8886" />
      </svg>
      <div className="grid h-[205px] grid-cols-[repeat(6,28px)] grid-rows-[repeat(7,28px)] pl-[6px] pt-[5px]">
        {vizIcons.map((n, i) => (
          <div key={i} className="flex items-center justify-center">
            <svg width="18" height="18" viewBox="0 0 18 18" fill="none" className="block overflow-visible">{n}</svg>
          </div>
        ))}
      </div>
      <div className="flex flex-col border-t border-[#d8d6d4] pl-[4px] text-[11.400px]">
        <div className="mt-[9px] pl-[8px] leading-4">Values</div>
        <div className="mt-[5px] flex h-7 w-[170px] items-center rounded-[2px] border border-dashed border-[#bebbb8] bg-white pl-[10px] pt-px">Add data fields here</div>
        <div className="mt-[11px] pl-[8px] font-semibold leading-4 tracking-[-0.1px] text-[#484644]">Drill through</div>
        <div className="mt-[8px] flex h-[18px] items-center justify-between pl-[8px] pr-[22px]">
          Cross-report
          <span className="flex h-4 w-8 items-center gap-px rounded-full border border-[#797775] bg-white pl-[4px] text-[9.200px] text-[#605e5c]">
            <i className="block h-2 w-2 rounded-full bg-[#605e5c]" />Off
          </span>
        </div>
        <div className="mt-[9px] flex h-[18px] items-center justify-between pl-[8px] pr-[22px]">
          Keep all filters
          <span className="flex h-4 w-8 items-center gap-[2px] rounded-full bg-[#117865] pl-[5px] text-[9px] font-semibold text-white">
            On<i className="block h-2 w-2 rounded-full bg-white" />
          </span>
        </div>
        <div className="mt-[9px] flex h-[26px] w-[170px] items-center whitespace-nowrap rounded-[2px] border border-dashed border-[#bebbb8] bg-white pl-[8px] pt-[2px] tracking-[0.05px]">Add drill-through fields here</div>
      </div>
    </aside>
  );
}

function DataPane() {
  return (
    <aside className="flex grow flex-col border-l border-[#d8d6d4] text-[#252423]">
      <div className="flex h-[38px] items-center justify-between pl-[8px] pr-[7px]">
        <span className="text-[14.800px] font-semibold">Data</span>
        <DoubleChevron />
      </div>
      <div className="ml-[4px] mt-[7px] flex h-[27px] w-[172px] items-center rounded-[2px] border border-[#605e5c] pl-[7px] text-[12.500px] text-[#484644]">
        <Search size={15} color="#605e5c" className="mb-[2px]" />
        <span className="ml-[6px] pt-[2px]">Search</span>
      </div>
      <div className="mt-[10px]">
        {["count_per_role", "count_per_role (2)", "Data Professional Survey", "grouped_by_role_langu..."].map((t) => (
          <div key={t} className="flex h-6 items-center whitespace-nowrap pl-[9px] text-[11.300px] text-[#323130]">
            <Ico w={8} h={12} className="mb-[2px]"><path d="M1 1l5.500 5L1 11" stroke="#605e5c" /></Ico>
            <Ico w={12} h={12} className="mb-[2px] ml-[6px] mr-[6px]">
              <rect x=".6" y=".6" width="10.800" height="10.800" rx="2" stroke={K} strokeWidth="1.200" />
              <path d="M.5 4h11M.5 8h11M4 .5v11M8 .5v11" stroke={K} />
            </Ico>
            {t}
          </div>
        ))}
      </div>
    </aside>
  );
}

function LeftRail() {
  return (
    <div className="flex w-[41px] shrink-0 flex-col border-r border-[#d8d6d4]">
      <div className="flex h-10 items-center border-l-[3px] border-[#117865] pl-[11px]">
        <Ico w={14} h={14}><path d="M.5 0v13.500H14" stroke="#111" strokeWidth="1.200" /><path d="M2.500 4.500h2v7h-2zM6.500 7.500h2v4h-2zM10.500 1.500h2v10h-2z" stroke="#111" /></Ico>
      </div>
      <div className="flex h-[39px] items-center pl-[13px]">
        <Ico w={16} h={16}><path d="M.5.5h15v14H.5zM.5 3.500h15M.5 7h15M.5 11h15M5.500 3.500v11M10.500 3.500v11" stroke="#797775" /></Ico>
      </div>
      <div className="flex h-[42px] items-center pl-[12px]">
        <Ico w={18} h={18}><path d="M.5 5.500h7v7h-7zM.5 8.500h7M10.500.5h7v7h-7zM10.500 3.500h7M10.500 10.500h7v7h-7zM10.500 13.500h7M4.500 5V2.500h6M4.500 13v2.500h6" stroke="#797775" strokeWidth="1.100" /></Ico>
      </div>
    </div>
  );
}

function PagesBar() {
  return (
    <div className="flex h-[35px] shrink-0">
      <div className="ml-[10px] flex w-6 flex-col items-center pt-[7px]">
        <Ico w={20} h={15} className="mr-[1px]"><path d="M.5.500h19v11H.5zM10 12v2.500M6.500 14.500h7" stroke="#484644" strokeWidth="1.100" /></Ico>
        <div className="mt-[6px] h-[3px] w-6 rounded bg-[#117865]" />
      </div>
      <Ico w={13} h={21} className="ml-[26px] mt-[5px]"><rect x=".6" y=".6" width="11.800" height="19.800" rx="1" stroke="#484644" strokeWidth="1.200" /><path d="M5.500 17.500h2" stroke="#484644" strokeWidth="1.500" /></Ico>
      <Ico w={5} h={8} className="ml-[21px] mt-[14px]"><path d="M5 0v8L0 4z" fill="#c8c6c4" /></Ico>
      <Ico w={5} h={8} className="ml-[17px] mt-[14px]"><path d="M0 0v8l5-4z" fill="#c8c6c4" /></Ico>
      <div className="ml-[6px] flex h-[35px] w-[77px] items-center justify-center border-b-4 border-l border-l-[#8a8886] border-b-[#117865] bg-white pt-[4px] text-[11.800px] font-medium tracking-[-0.3px]">Page 1</div>
      <div className="mt-[2px] flex h-8 w-[39px] items-center justify-center bg-[#117865]">
        <Ico w={12} h={12}><path d="M6 .5v11M.5 6h11" stroke="#fff" strokeWidth="2.600" /></Ico>
      </div>
    </div>
  );
}

function StatusBar() {
  return (
    <footer className="flex h-[25px] shrink-0 items-center whitespace-nowrap border-b border-t border-t-[#d8d6d4] border-b-black bg-[#f3f2f1] text-[11.500px] text-[#484644]">
      <span className="ml-[4px] w-[60px] pt-[2px]">Page 1 of 1</span>
      <Ico w={125} h={12} className="ml-[898px]">
        <path d="M0 6.500h4" stroke="#323130" strokeWidth="1.600" />
        <path d="M9 6.500h100M59.500 3v6" stroke="#605e5c" />
        <path d="M37 1v11" stroke="#605e5c" strokeWidth="3.500" />
        <path d="M115 6.500h8M119 2.500v8" stroke="#484644" strokeWidth="1.200" />
      </Ico>
      <span className="ml-[11px] w-[23px]">60%</span>
      <Ico w={17} h={13} className="ml-[19px]">
        <path d="M.6.600h15.800v11.800H.6z" stroke="#605e5c" strokeWidth="1.200" />
        <path d="M3 5V3h2M12 3h2v2M14 8v2h-2M5 10H3V8" stroke="#605e5c" />
      </Ico>
      <span className="ml-[13px] pt-[2px]">Update available (click to download)</span>
    </footer>
  );
}

/* ---------- taskbar ---------- */
function TaskItem({ on, wide, children }: { on?: boolean; wide?: boolean } & Kids) {
  return (
    <div className={`flex h-10 w-[49px] shrink-0 flex-col items-center justify-between ${wide ? "bg-[#f0f3f7]" : ""}`}>
      <div className="flex h-[38px] items-center pt-[2px]">{children}</div>
      <div className={`h-[2px] ${wide ? "w-[48px]" : "w-10"} ${on ? "bg-[#0a78d4]" : ""}`} />
    </div>
  );
}

function Taskbar() {
  return (
    <div className="flex h-10 shrink-0 items-center bg-[linear-gradient(90deg,#d4dcde,#dcdddc_45%,#d9dfe8_75%,#dfdcdd_90%,#ead9d3)] text-[#111]">
      <Ico w={17} h={17} className="ml-[16px]"><path d="M0 2.500l7-1V8H0zM8 1.300L16.500 0v8H8zM0 9h7v6.500l-7-1zM8 9h8.500v8L8 15.700z" fill="#000" /></Ico>
      <div className="ml-[16px] mr-[1px] mt-px flex h-[39px] w-[286px] items-center border border-[#c2c4c5] bg-white pl-[10px]">
        <Search size={17} color="#111" />
        <span className="ml-[11px] w-[128px] whitespace-nowrap pt-[2px] text-[13.900px]">Type here to search</span>
        <Ico w={62} h={26} className="ml-[48px]">
          <path d="M24 0c1.500 8.500 4 11 11 12-7 1-9.500 4-11 12-1.500-8-4-11-11-12 7-1 9.500-3.500 11-12z" fill="#fbc02d" stroke="#fbc02d" strokeWidth="1.500" strokeLinejoin="round" />
          <path d="M47 10c.8 3.500 2 5 5 5.500-3 .5-4.200 2-5 5.500-.8-3.500-2-5-5-5.500 3-.5 4.200-2 5-5.500z" fill="#f9b92a" stroke="#f9b92a" strokeLinejoin="round" />
          <path d="M5 16c.8 3 2 3.500 4 4-2.500.5-3.500 1.500-4 4.500C4 22 3 21 .5 20.500 3.500 19.500 4 18.500 5 16z" fill="#2196f3" stroke="#2196f3" strokeLinejoin="round" />
          <circle cx="40" cy="2" r="2" fill="#ef6c35" /><circle cx="58" cy="22" r="2" fill="#8bc34a" />
        </Ico>
      </div>
      <TaskItem><Ico w={17} h={16}><path d="M0 2h12M1.500 0v2M10.500 0v2M1.500 4.500h9v7h-9zM0 14h12M1.500 14v2M10.500 14v2M15 0v4M15 8v8" stroke="#111" strokeWidth="1.200" /><path d="M13.500 4h3v3h-3z" fill="#111" /></Ico></TaskItem>
      <span className="w-px shrink-0" />
      <TaskItem>
        <Ico w={24} h={24}>
          <defs><linearGradient id="ga" x1="0" y1="1" x2="1" y2="0"><stop stopColor="#5a19e8" /><stop offset="1" stopColor="#1294ff" /></linearGradient></defs>
          <path d="M0 0h24v24H0z" fill="url(#ga)" /><path d="M3.500 17L9 7M8 17l5.500-10M12.500 17L18 7v10M14.500 14H18" stroke="#fff" strokeWidth="1.900" />
        </Ico>
      </TaskItem>
      <TaskItem><Ico w={24} h={24}><path d="M0 9l12-9 12 9v14H0z" fill="#0b64b4" /><path d="M3 8h18v8H3z" fill="#f6f8fa" /><path d="M0 9l12 8L24 9v14H0z" fill="#38b6f1" /><path d="M0 23l12-8 12 8z" fill="#1490df" /></Ico></TaskItem>
      <TaskItem on><Ico w={22} h={19}><path d="M0 0h8l2 3H0z" fill="#d99a12" /><path d="M0 3h22v15H0z" fill="#ffd467" /><path d="M4 10h14v9h-4v-4H8v4H4z" fill="#3b93db" /></Ico></TaskItem>
      <TaskItem>
        <Ico w={24} h={24}><path d="M6 7V3c0-1 .5-2 2-2h8c1.500 0 2 1 2 2v4" stroke="#28a8ea" strokeWidth="2" /><path d="M1 5h22v16c0 2-1 3-3 3H4c-2 0-3-1-3-3z" fill="#153e75" />
          <path d="M7 9h4.500v4.500H7z" fill="#f25022" /><path d="M12.500 9H17v4.500h-4.500z" fill="#7fba00" /><path d="M7 14.500h4.500V19H7z" fill="#00a4ef" /><path d="M12.500 14.500H17V19h-4.500z" fill="#ffb900" /></Ico>
      </TaskItem>
      <TaskItem><Ico w={20} h={24}><path d="M2.500 17h15l2.500 6.500H0z" fill="#f07800" /><path d="M8.800 0h2.400l5.500 20H3.300z" fill="#f58220" /><path d="M7.500 5h5l1.200 4H6.300zM5.400 12.500h9.200l1 3.500H4.300z" fill="#f5f3f0" /></Ico></TaskItem>
      <TaskItem>
        <Ico w={24} h={24} vb="0 0 25 25">
          <circle cx="12.500" cy="12.500" r="12" fill="#1282cf" /><path d="M1 10C3 2 9 0 13 .5c8 .5 12 6 11.500 11-.5 5-6 6-9 4 2-2 1-6-2-7C9 7 4 7.500 1 10z" fill="#38c3b0" /><path d="M18 3c4 2 7 5 6.500 9-.5 4-5 5-8 4 3-3 3-8 1.500-13z" fill="#65d36c" />
          <path d="M9 11c-2 5 2 12 10 11.500 2-.5 3-1.500 4-3-5 2-10 0-9.500-5 .5-3-3-6-4.500-3.500z" fill="#0c4a94" /><path d="M14 15c2 2 5 2 8 1-3 3-8 3-8-1z" fill="#e6edf0" />
        </Ico>
      </TaskItem>
      <TaskItem><Ico w={24} h={24}><rect width="24" height="24" rx="2" fill="#1d5b88" /><path d="M4 5c4-2 8 1 10 5l3 5 4 2-3 1 2 3M4 5c2 4 1 7 3 10l1-3 3 8M14 4h6" stroke="#d8e6ef" strokeWidth="1.200" /></Ico></TaskItem>
      <TaskItem><Ico w={22} h={22}><circle cx="11" cy="11" r="11" fill="#fff" /><path d="M11 4c4.500 5 3 10.500 0 13.500-3-3-4.500-8.500 0-13.500z" fill="#13a05c" /><path d="M11 4.500v14" stroke="#116149" strokeWidth="1.500" /></Ico></TaskItem>
      <TaskItem on><Ico w={22} h={22}><circle cx="11" cy="11" r="9" stroke="#44b034" strokeWidth="3" /><circle cx="11" cy="11" r="10" stroke="#c9ebc4" strokeDasharray="1 3" /></Ico></TaskItem>
      <TaskItem on><Ico w={23} h={19}><path d="M0 0h23v19H0z" fill="#0b0b0b" /><path d="M0 0h23v3H0z" fill="#b9bcc0" /><path d="M3 6.500h2M3 9.500h2M7 7h1M7 9h1M10 6l2 4M14 10h6" stroke="#fff" strokeWidth="1.200" /></Ico></TaskItem>
      <TaskItem on><Ico w={24} h={24}><path d="M13 4h10v16H13z" fill="#fff" stroke="#1e7145" /><path d="M15 7.500h3M19.500 7.500h3M15 10.500h3M19.500 10.500h3M15 13.500h3M19.500 13.500h3M15 16.500h3M19.500 16.500h3" stroke="#1e7145" strokeWidth="1.700" /><path d="M1 3l13-3v24L1 21z" fill="#1e7145" /><path d="M4.500 8l5.500 8M10 8l-5.500 8" stroke="#fff" strokeWidth="2" /></Ico></TaskItem>
      <TaskItem on>
        <Ico w={26} h={26}>
          <circle cx="12" cy="12" r="12" fill="#ffcd40" /><path d="M12 12l-2 11.800A12 12 0 011.600 6z" fill="#1aa260" /><path d="M12 6h10.400a12 12 0 00-20.800 0L7 14z" fill="#e33b2e" /><circle cx="12" cy="12" r="5.600" fill="#fff" /><circle cx="12" cy="12" r="4.500" fill="#3c79e6" />
          <circle cx="18.500" cy="18" r="7.500" fill="#17181b" /><circle cx="18.500" cy="14.500" r="1.800" fill="#6b4a3c" /><path d="M18 17.500h1.500l.5 3h-2.500zM16.500 23l1.500-2 2 3z" fill="#d5d8dc" />
        </Ico>
      </TaskItem>
      <TaskItem on wide><Ico w={20} h={24}><path d="M11 0h7a1.500 1.500 0 011.500 1.500V24H11z" fill="#d99b0b" /><path d="M6 6h7a1.500 1.500 0 011.500 1.500V24H6z" fill="#eec02c" /><path d="M0 13.500A1.500 1.500 0 011.500 12H7a1.500 1.500 0 011.500 1.500V24H1.500A1.500 1.500 0 010 22.500z" fill="#f9e08a" /></Ico></TaskItem>
      <div className="ml-auto flex items-center pr-[18px]">
        <Ico w={12} h={7}><path d="M.7 6.300L6 1l5.300 5.300" stroke="#111" strokeWidth="1.300" /></Ico>
        <Ico w={12} h={16} className="ml-[13px]"><rect x="1" y="4" width="7" height="9" rx="1.500" stroke="#111" strokeWidth="1.200" /><path d="M8.500 7L11 5.500v6L8.500 10M2 1.500c2-1 4-1 6 0M2 15c2 1 4 1 6 0" stroke="#111" strokeWidth="1.100" /></Ico>
        <Ico w={17} h={14} className="ml-[9px]"><path d="M4 11.500c-4 0-4-5-.5-5.500C4 1 11 1 12 5.500c4 0 4 6 0 6z" fill="#a9a9a9" stroke="#111" strokeWidth="1.200" /><path d="M2 1l12 12" stroke="#111" strokeWidth="1.400" /></Ico>
        <Ico w={15} h={10} className="ml-[8px]"><path d="M.6.600h12v8H.6zM14 3v4" stroke="#111" strokeWidth="1.200" /><path d="M2.500 2.500h3.500v4H2.500z" fill="#111" /></Ico>
        <Ico w={14} h={14} className="ml-[10px]"><path d="M1 12C1 6 6 1 13 1M4 13c0-5 4-9 9-9M7 13.500c0-3.500 3-6.500 6-6.500M10 13.500c0-2 1-3.500 3-3.500" stroke="#333" strokeWidth="1.100" /><circle cx="12.500" cy="12.500" r="1.300" fill="#111" /></Ico>
        <Ico w={17} h={14} className="ml-[7px]"><path d="M.6 5h3L7 1.500v11L3.600 9h-3zM9.500 4.500c1.500 1.500 1.500 3.500 0 5M11.700 2.500c2.500 2.500 2.500 6.500 0 9M14 .8c3.300 3.500 3.300 9 0 12.400" stroke="#111" strokeWidth="1.100" /></Ico>
        <div className="ml-[9px] w-[58px] whitespace-nowrap text-center text-[11.300px] leading-[18px] tracking-[-0.3px]">21:59<br />05/07/2024</div>
        <div className="relative ml-[17px] h-6 w-[25px]">
          <Ico w={17} h={17}><path d="M0 1h16v12h-7l-4 4v-4H0z" fill="#111" /><path d="M3 4.500h10M3 7h10M3 9.500h6" stroke="#fff" strokeWidth="1.100" /></Ico>
          <span className="absolute left-[8px] top-[10px] flex h-[17px] w-[17px] items-center justify-center rounded-full border border-[#555] bg-[#d6d3d2] text-[11px]">3</span>
        </div>
      </div>
    </div>
  );
}

export default function App() {
  return (
    <div className="flex h-[768px] w-[1366px] flex-col overflow-hidden bg-[#f3f2f1] font-['Open_Sans',sans-serif]">
      <TitleBar />
      <div className="z-10 h-[126px] shrink-0 bg-[#fafafa] shadow-[0_1px_4px_rgba(0,0,0,0.3)]">
        <Tabs />
        <Ribbon />
      </div>
      <div className="flex h-[543px] shrink-0">
        <LeftRail />
        <div className="flex w-[963px] shrink-0 flex-col">
          <div className="flex h-[508px] shrink-0">
            <Report />
            <Filters />
          </div>
          <PagesBar />
        </div>
        <Visualizations />
        <DataPane />
      </div>
      <StatusBar />
      <Taskbar />
    </div>
  );
}
